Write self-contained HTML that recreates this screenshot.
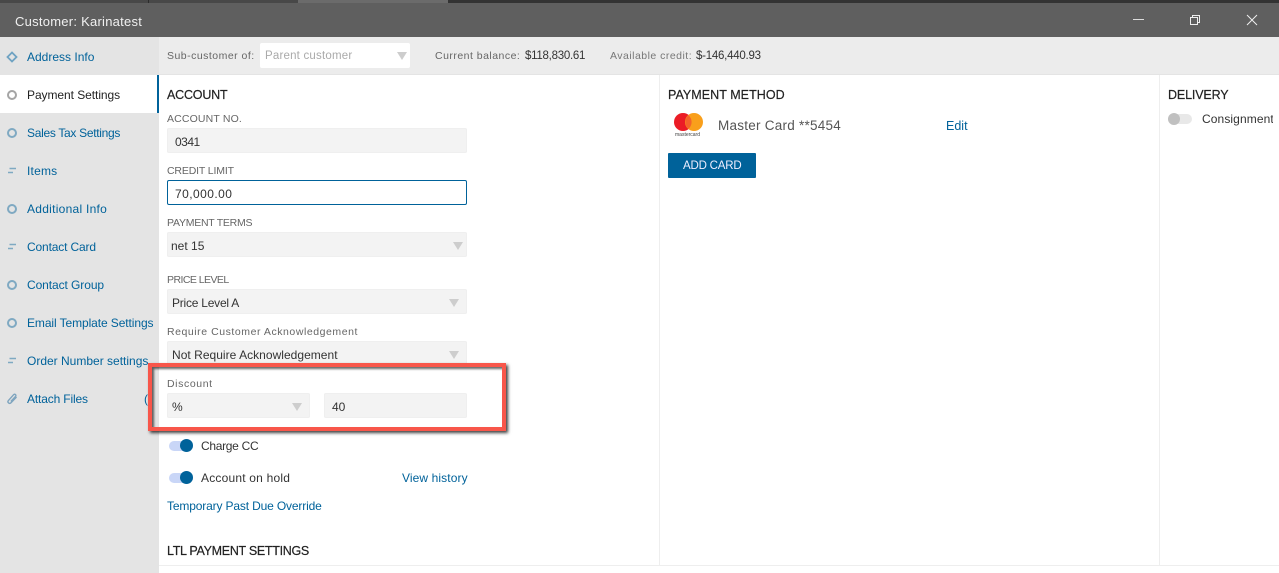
<!DOCTYPE html>
<html><head><meta charset="utf-8">
<style>
html,body{margin:0;padding:0;background:#fff}
#p{position:relative;width:1279px;height:573px;overflow:hidden;background:#fff;font-family:"Liberation Sans",sans-serif;font-size:12px;color:#333}
#p div,#p span.t,#p svg{position:absolute}
.t{white-space:nowrap;line-height:16px}
.nav{color:#00629a;left:27px}
.lab{color:#666;font-size:10.5px;left:167px}
.h{color:#222;font-size:12.5px;letter-spacing:.05px;-webkit-text-stroke:.2px #222}
.f{background:#f3f3f3;border-radius:2px;height:25px;box-shadow:inset 0 0 0 1px #efefef}
.v{color:#333}
.tri{width:0;height:0;border-left:5px solid transparent;border-right:5px solid transparent;border-top:8px solid #cdcdcd}
.tr{background:#c9d6f7;border-radius:5px;width:24px;height:10px;left:169px}
.kn{background:#00629a;border-radius:50%;width:13px;height:13px;left:180px}
.ic{left:7px;width:6px;height:6px;border:2px solid #7fa9c2;border-radius:50%;box-sizing:content-box}
</style></head><body><div id="p">
<div style="left:0;top:0;width:1279px;height:3px;background:#333"></div>
<div style="left:0;top:0;width:298px;height:3px;background:#484848"></div>
<div style="left:148px;top:0;width:1px;height:3px;background:#2c2c2c"></div>
<div style="left:298px;top:0;width:150px;height:3px;background:#6b6b6b"></div>
<div style="left:0;top:3px;width:1279px;height:34px;background:#5f5f5f"></div>
<span class="t" style="left:15px;top:14px;color:#f0f0f0;font-size:13px;letter-spacing:.25px">Customer: Karinatest</span>
<div style="left:1133px;top:19px;width:11px;height:1px;background:#ddd"></div>
<svg style="left:1189px;top:14px" width="12" height="12" viewBox="0 0 12 12"><path d="M1.500 3.500h7v7h-7zM3.500 3.500v-2h7v7h-2" fill="none" stroke="#eee" stroke-width="1"/></svg>
<svg style="left:1246px;top:14px" width="12" height="12" viewBox="0 0 12 12"><path d="M1 1l10 10M11 1L1 11" fill="none" stroke="#eee" stroke-width="1"/></svg>

<div style="left:0;top:37px;width:159px;height:536px;background:#e4e4e4"></div>
<div style="left:159px;top:37px;width:1120px;height:38px;background:#ececec;border-bottom:1px solid #e4e4e4;box-sizing:border-box"></div>
<div style="left:0;top:75px;width:157px;height:38px;background:#fff"></div>
<div style="left:157px;top:75px;width:2px;height:38px;background:#00629a"></div>

<svg style="left:6px;top:51px" width="12" height="12" viewBox="0 0 12 12"><path d="M6 1.500L10.500 6 6 10.500 1.500 6z" fill="none" stroke="#6fa3c2" stroke-width="1.800"/></svg>
<span class="t nav" style="top:49px">Address Info</span>
<div class="ic" style="top:90px;border-color:#a5a5a5"></div>
<span class="t" style="left:27px;top:87px;color:#222;letter-spacing:-.06px">Payment Settings</span>
<div class="ic" style="top:128px"></div>
<span class="t nav" style="top:125px;letter-spacing:-.3px">Sales Tax Settings</span>
<svg style="left:7px;top:167px" width="10" height="8" viewBox="0 0 10 8"><path d="M2.500 1.500H9M1 5.500H6" stroke="#7fa9c2" stroke-width="1.500" fill="none"/></svg>
<span class="t nav" style="top:163px;letter-spacing:.2px">Items</span>
<div class="ic" style="top:204px"></div>
<span class="t nav" style="top:201px;letter-spacing:.27px">Additional Info</span>
<svg style="left:7px;top:243px" width="10" height="8" viewBox="0 0 10 8"><path d="M2.500 1.500H9M1 5.500H6" stroke="#7fa9c2" stroke-width="1.500" fill="none"/></svg>
<span class="t nav" style="top:239px;letter-spacing:-.15px">Contact Card</span>
<div class="ic" style="top:280px"></div>
<span class="t nav" style="top:277px;letter-spacing:-.08px">Contact Group</span>
<div class="ic" style="top:318px"></div>
<span class="t nav" style="top:315px;letter-spacing:-.09px">Email Template Settings</span>
<svg style="left:7px;top:357px" width="10" height="8" viewBox="0 0 10 8"><path d="M2.500 1.500H9M1 5.500H6" stroke="#7fa9c2" stroke-width="1.500" fill="none"/></svg>
<span class="t nav" style="top:353px">Order Number settings</span>
<svg style="left:6px;top:392px" width="12" height="13" viewBox="0 0 12 13"><path d="M10.500 5L5 10.800C3.500 12.300 1 10.500 2.300 8.700L7.500 2.800C8.700 1.500 10.800 3 9.500 4.500L4.800 9.500" fill="none" stroke="#7fa5bf" stroke-width="1.400"/></svg>
<span class="t nav" style="top:391px;letter-spacing:-.15px">Attach Files</span>
<span class="t nav" style="left:144px;top:391px">(</span>

<span class="t" style="left:167px;top:48px;color:#666;font-size:10.500px;letter-spacing:.48px">Sub-customer of:</span>
<div style="left:260px;top:43px;width:150px;height:25px;background:#fff;border-radius:2px"></div>
<span class="t" style="left:265px;top:48px;color:#aaa;font-size:11.500px;letter-spacing:.2px">Parent customer</span>
<div class="tri" style="left:397px;top:52px"></div>
<span class="t" style="left:435px;top:48px;color:#666;font-size:10.500px;letter-spacing:.48px">Current balance:</span>
<span class="t" style="left:525px;top:48px;color:#333;font-size:11.500px;letter-spacing:-.27px">$118,830.61</span>
<span class="t" style="left:610px;top:48px;color:#777;font-size:10.500px;letter-spacing:.48px">Available credit:</span>
<span class="t" style="left:696px;top:48px;color:#333;font-size:11.500px;letter-spacing:-.25px">$-146,440.93</span>

<div style="left:659px;top:75px;width:1px;height:490px;background:#eee"></div>
<div style="left:1159px;top:75px;width:1px;height:490px;background:#eee"></div>
<div style="left:159px;top:565px;width:1120px;height:1px;background:#eee"></div>

<span class="t h" style="left:167px;top:87px;letter-spacing:-.2px">ACCOUNT</span>
<span class="t lab" style="top:111px;letter-spacing:.15px">ACCOUNT NO.</span>
<div class="f" style="left:167px;top:128px;width:300px"></div>
<span class="t v" style="left:175px;top:134px;letter-spacing:-.5px">0341</span>
<span class="t lab" style="top:163px;letter-spacing:-.15px">CREDIT LIMIT</span>
<div style="left:167px;top:180px;width:300px;height:25px;box-sizing:border-box;background:#fff;border:1px solid #00629a;border-radius:2px"></div>
<span class="t v" style="left:175px;top:186px;letter-spacing:.45px">70,000.00</span>
<span class="t lab" style="top:215px;letter-spacing:-.25px">PAYMENT TERMS</span>
<div class="f" style="left:167px;top:232px;width:300px"></div>
<span class="t v" style="left:171px;top:238px">net 15</span>
<div class="tri" style="left:453px;top:242px"></div>
<span class="t lab" style="top:272px;letter-spacing:-.55px">PRICE LEVEL</span>
<div class="f" style="left:167px;top:289px;width:300px"></div>
<span class="t v" style="left:172px;top:295px;letter-spacing:-.23px">Price Level A</span>
<div class="tri" style="left:449px;top:299px"></div>
<span class="t lab" style="top:324px;letter-spacing:.55px">Require Customer Acknowledgement</span>
<div class="f" style="left:167px;top:341px;width:300px"></div>
<span class="t v" style="left:172px;top:347px;letter-spacing:.03px">Not Require Acknowledgement</span>
<div class="tri" style="left:449px;top:351px"></div>

<span class="t lab" style="top:376px;letter-spacing:.6px">Discount</span>
<div class="f" style="left:167px;top:393px;width:143px"></div>
<span class="t v" style="left:172px;top:399px">%</span>
<div class="tri" style="left:292px;top:403px"></div>
<div class="f" style="left:324px;top:393px;width:143px"></div>
<span class="t v" style="left:332px;top:399px">40</span>

<div style="left:148px;top:363px;width:358px;height:68px;box-sizing:border-box;border:4px solid #f8564a;box-shadow:2px 2px 3px rgba(0,0,0,.75),inset 2px 2px 2px rgba(0,0,0,.6)"></div>

<div class="tr" style="top:441px"></div>
<div class="kn" style="top:439px"></div>
<span class="t" style="left:201px;top:438px;letter-spacing:-.3px">Charge CC</span>
<div class="tr" style="top:473px"></div>
<div class="kn" style="top:471px"></div>
<span class="t" style="left:201px;top:470px;letter-spacing:.2px">Account on hold</span>
<span class="t" style="left:402px;top:470px;color:#00629a;letter-spacing:.1px">View history</span>
<span class="t" style="left:167px;top:498px;color:#00629a;letter-spacing:-.15px">Temporary Past Due Override</span>
<span class="t h" style="left:167px;top:543px;letter-spacing:-.3px">LTL PAYMENT SETTINGS</span>

<span class="t h" style="left:668px;top:87px">PAYMENT METHOD</span>
<div style="left:674px;top:113px;width:18px;height:18px;border-radius:50%;background:#eb1c26"></div>
<div style="left:685px;top:113px;width:18px;height:18px;border-radius:50%;background:#f99f1b"></div>
<svg style="left:674px;top:113px" width="29" height="18" viewBox="0 0 29 18"><path d="M14.500 2.200a9 9 0 0 1 0 13.600a9 9 0 0 1 0-13.600z" fill="#f4632a"/></svg>
<span class="t" style="left:675px;top:132px;font-size:5px;line-height:6px;color:#444">mastercard</span>
<span class="t" style="left:718px;top:118px;font-size:13.500px;color:#555;letter-spacing:.25px">Master Card **5454</span>
<span class="t" style="left:946px;top:118px;color:#00629a;font-size:12.500px">Edit</span>
<div style="left:668px;top:153px;width:88px;height:25px;background:#00629a;border-radius:1px"></div>
<span class="t" style="left:683px;top:158px;color:#eef;font-size:11.500px;letter-spacing:-.2px">ADD CARD</span>

<span class="t h" style="left:1168px;top:87px;letter-spacing:-.15px">DELIVERY</span>
<div style="left:1168px;top:114px;width:24px;height:10px;border-radius:5px;background:#e8e8e8"></div>
<div style="left:1168px;top:113px;width:12px;height:12px;border-radius:50%;background:#c0c0c0"></div>
<span class="t" style="left:1202px;top:111px;letter-spacing:.1px;width:71px;overflow:hidden">Consignment</span>
</div></body></html>
